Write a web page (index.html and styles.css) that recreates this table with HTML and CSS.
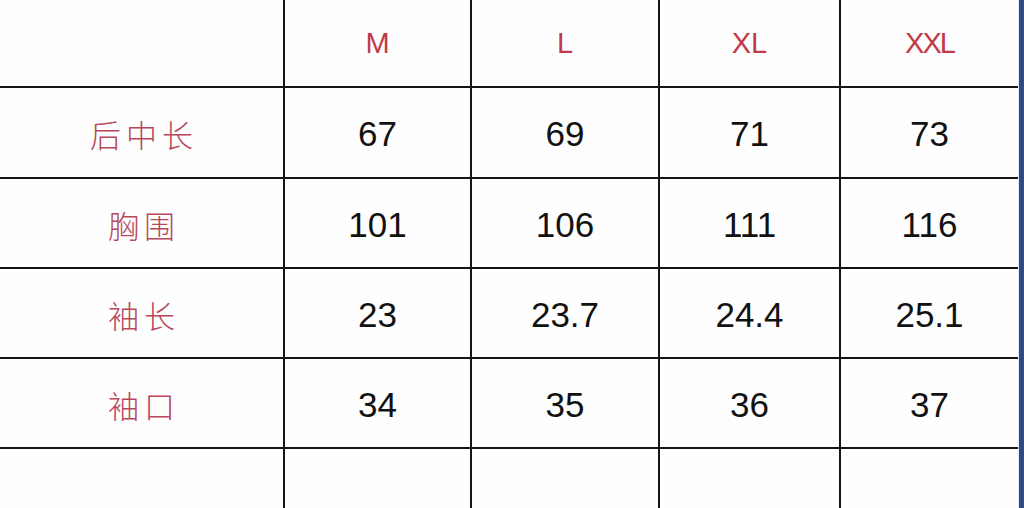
FILE: index.html
```html
<!DOCTYPE html>
<html lang="zh">
<head>
<meta charset="utf-8">
<title>尺码表</title>
<link rel="stylesheet" href="styles.css">
</head>
<body>
<div class="page">
  <div class="table">
    <div class="cell"></div>
    <div class="cell size">M</div>
    <div class="cell size">L</div>
    <div class="cell size">XL</div>
    <div class="cell size last xxl">XXL</div>

    <div class="cell label">后中长</div>
    <div class="cell num">67</div>
    <div class="cell num">69</div>
    <div class="cell num">71</div>
    <div class="cell num last">73</div>

    <div class="cell label">胸围</div>
    <div class="cell num">101</div>
    <div class="cell num">106</div>
    <div class="cell num">111</div>
    <div class="cell num last">116</div>

    <div class="cell label">袖长</div>
    <div class="cell num">23</div>
    <div class="cell num">23.7</div>
    <div class="cell num">24.4</div>
    <div class="cell num last">25.1</div>

    <div class="cell label">袖口</div>
    <div class="cell num">34</div>
    <div class="cell num">35</div>
    <div class="cell num">36</div>
    <div class="cell num last">37</div>

    <div class="cell bottom"></div>
    <div class="cell bottom"></div>
    <div class="cell bottom"></div>
    <div class="cell bottom"></div>
    <div class="cell bottom last"></div>
  </div>
  <div class="edge"></div>
</div>
</body>
</html>
```

FILE: styles.css
```css
* { box-sizing: border-box; }
html, body {
  margin: 0;
  padding: 0;
  background: #ffffff;
  overflow: hidden;
}
.page {
  display: flex;
  width: 1024px;
  height: 508px;
}
.table {
  display: grid;
  grid-template-columns: 285px 187px 188px 181px 177px;
  grid-template-rows: 88px 91px 90px 90px 90px 59px;
  width: 1018px;
  height: 508px;
  background: #fefefe;
}
.cell {
  display: flex;
  align-items: center;
  justify-content: center;
  border-right: 2px solid #151515;
  border-bottom: 2px solid #151515;
  font-family: "Liberation Sans", Arial, sans-serif;
}
.cell.last { border-right: none; }
.cell.bottom { border-bottom: none; }
.size {
  font-size: 29px;
  color: #c23a48;
  padding-top: 1px;
}
.xxl { letter-spacing: -2px; }
.num {
  font-size: 35px;
  color: #111111;
  padding-top: 3px;
}
.label {
  font-family: "Noto Sans CJK SC", "Noto Sans CJK JP", sans-serif;
  font-weight: 300;
  font-size: 31px;
  letter-spacing: 5px;
  padding-left: 5px;
  color: #b8485a;
  padding-top: 2px;
}
.edge {
  width: 6px;
  height: 508px;
  border-left: 1px solid #e6eaf2;
  background: #2e4a86;
}
```
